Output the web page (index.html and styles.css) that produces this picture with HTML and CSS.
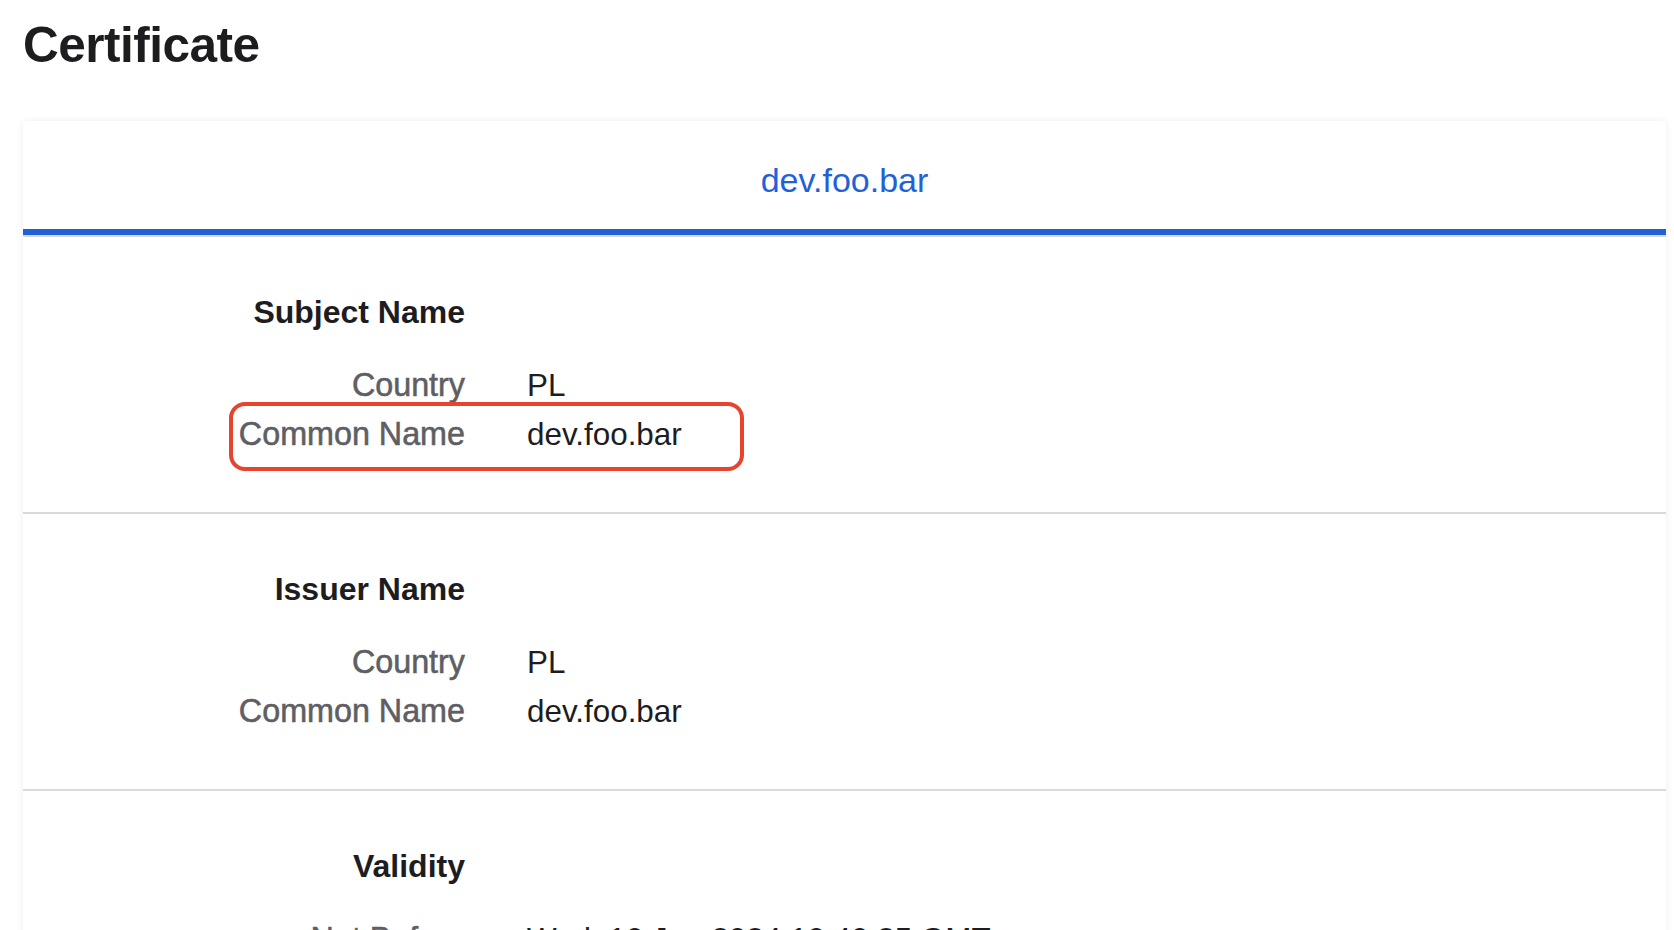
FILE: index.html
```html
<!DOCTYPE html>
<html lang="en">
<head>
<meta charset="utf-8">
<title>Certificate</title>
<link rel="stylesheet" href="styles.css">
</head>
<body>
<div class="page">
  <h1 class="title">Certificate</h1>
  <div class="card">
    <div class="tab-header"><span class="tab-label">dev.foo.bar</span></div>
    <section class="section">
      <h2 class="section-title">Subject Name</h2>
      <div class="row"><div class="label">Country</div><div class="value">PL</div></div>
      <div class="row highlighted"><div class="label">Common Name</div><div class="value">dev.foo.bar</div><span class="highlight"></span></div>
    </section>
    <section class="section">
      <h2 class="section-title">Issuer Name</h2>
      <div class="row"><div class="label">Country</div><div class="value">PL</div></div>
      <div class="row"><div class="label">Common Name</div><div class="value">dev.foo.bar</div></div>
    </section>
    <section class="section">
      <h2 class="section-title">Validity</h2>
      <div class="row"><div class="label">Not Before</div><div class="value">Wed, 10 Jan 2024 10:40:25 GMT</div></div>
      <div class="row"><div class="label">Not After</div><div class="value">Sat, 07 Jan 2034 10:40:25 GMT</div></div>
    </section>
  </div>
</div>
</body>
</html>
```

FILE: styles.css
```css
html, body {
  margin: 0;
  padding: 0;
  background: #ffffff;
}
body {
  font-family: "Liberation Sans", Arial, sans-serif;
  color: #1d1d1f;
  overflow: hidden;
}
.page {
  padding: 17px 8px 0 23px;
}
.title {
  margin: 0;
  font-size: 49.5px;
  line-height: 56px;
  font-weight: 700;
  letter-spacing: -0.5px;
  color: #1d1d1f;
}
.card {
  margin-top: 48px;
  background: #ffffff;
  box-shadow: 0 0 7px rgba(0, 0, 0, 0.07);
}
.tab-header {
  height: 114px;
  box-sizing: border-box;
  padding-top: 39px;
  text-align: center;
  border-bottom: 6px solid #1f62d8;
}
.tab-label {
  font-size: 34px;
  line-height: 40px;
  color: #1f62d8;
}
.section {
  border-top: 2px solid #d9d9dc;
  padding: 57px 0 53px 0;
}
.section-title {
  margin: 0 0 31px 0;
  width: 442px;
  text-align: right;
  font-size: 32px;
  line-height: 36px;
  font-weight: 700;
  color: #1d1d1f;
}
.row {
  position: relative;
  display: grid;
  grid-template-columns: 442px 1fr;
  column-gap: 62px;
  height: 49px;
  line-height: 49px;
  font-size: 31.4px;
}
.label {
  text-align: right;
  color: #5e5e63;
  font-size: 32.3px;
  -webkit-text-stroke: 0.55px #5e5e63;
}
.value {
  color: #1d1d1f;
}
.highlight {
  position: absolute;
  left: 206px;
  top: -8px;
  width: 515px;
  height: 69px;
  box-sizing: border-box;
  border: 4px solid #e8432d;
  border-radius: 16px;
  pointer-events: none;
}
```
